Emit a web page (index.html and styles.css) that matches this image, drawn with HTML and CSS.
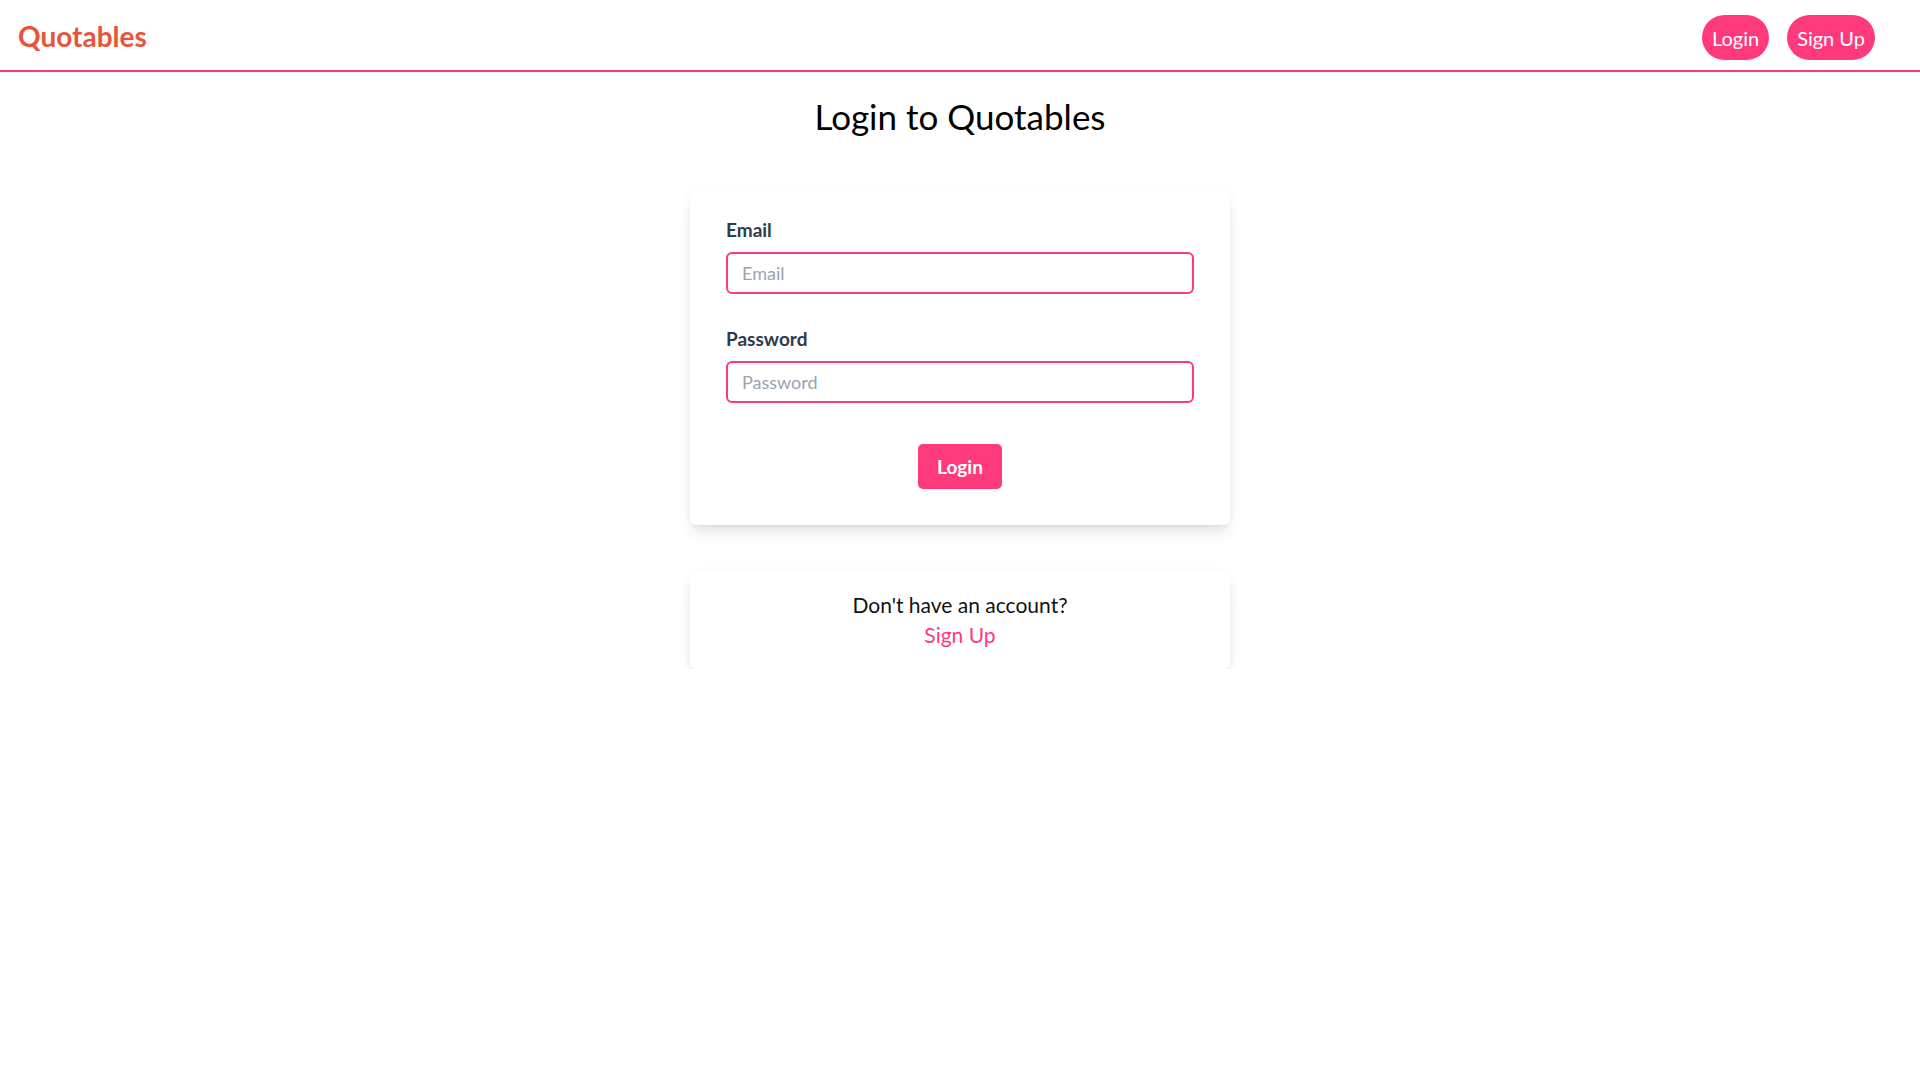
FILE: index.html
```html
<!DOCTYPE html>
<html lang="en">
<head>
<meta charset="utf-8">
<title>Login to Quotables</title>
<link rel="stylesheet" href="styles.css">
</head>
<body>
<header class="topbar">
  <a class="logo" href="#">Quotables</a>
  <nav class="nav">
    <a class="pill" href="#">Login</a>
    <a class="pill" href="#">Sign Up</a>
  </nav>
</header>
<main class="page">
  <h1 class="title">Login to Quotables</h1>
  <form class="card form-card">
    <label class="field-label" for="email">Email</label>
    <input class="field" id="email" type="email" placeholder="Email">
    <label class="field-label second" for="password">Password</label>
    <input class="field" id="password" type="password" placeholder="Password">
    <div class="actions">
      <button class="submit" type="button">Login</button>
    </div>
  </form>
  <section class="card signup-card">
    <p class="signup-text">Don't have an account?</p>
    <a class="signup-link" href="#">Sign Up</a>
  </section>
</main>
</body>
</html>
```
FILE: styles.css
```css
* { box-sizing: border-box; }
html, body { margin: 0; padding: 0; background: #ffffff; }
body { font-family: "Lato", "Open Sans", sans-serif; color: #000; }

.topbar {
  height: 72px;
  display: flex;
  align-items: center;
  justify-content: space-between;
  padding: 4px 45px 0 18px;
  border-bottom: 2px solid #ff3a7c;
}
.logo {
  font-size: 28px;
  font-weight: 700;
  color: #e9533b;
  text-decoration: none;
  line-height: 1;
  margin-top: -2px;
}
.nav { display: flex; gap: 18px; }
.pill {
  height: 45px;
  display: flex;
  align-items: center;
  padding: 1px 10px 0;
  border-radius: 999px;
  background: #ff3a7c;
  color: #fff;
  text-decoration: none;
  font-size: 20px;
}

.page {
  display: flex;
  flex-direction: column;
  align-items: center;
}
.title {
  margin: 23px 0 54px;
  font-size: 35px;
  font-weight: 400;
  line-height: 42px;
  color: #000;
}
.card {
  width: 540px;
  background: #fff;
  border-radius: 6px;
  box-shadow: 0 10px 15px -3px rgba(0,0,0,0.1), 0 4px 6px -2px rgba(0,0,0,0.05), 0 0 12px rgba(0,0,0,0.03);
}
.form-card {
  display: flex;
  flex-direction: column;
  padding: 25px 36px 36px;
}
.field-label {
  font-size: 19px;
  font-weight: 700;
  line-height: 28px;
  color: #2f3a4c;
  margin-bottom: 8px;
}
.field-label.second { margin-top: 31px; }
.field {
  height: 42px;
  width: 100%;
  border: 2px solid #ff3a7c;
  border-radius: 6px;
  padding: 0 14px;
  font-family: inherit;
  font-size: 18px;
  color: #111;
  outline: none;
}
.field::placeholder { color: #9aa3b2; }
.actions {
  display: flex;
  justify-content: center;
  margin-top: 41px;
}
.submit {
  width: 84px;
  height: 45px;
  border: none;
  border-radius: 5px;
  background: #ff3a7c;
  color: #fff;
  font-family: inherit;
  font-size: 19px;
  font-weight: 700;
}
.signup-card {
  margin-top: 47px;
  padding: 18px 0 19px;
  display: flex;
  flex-direction: column;
  align-items: center;
}
.signup-text {
  margin: 0;
  font-size: 21px;
  line-height: 30px;
  color: #111;
}
.signup-link {
  font-size: 21px;
  line-height: 30px;
  color: #ff3a7c;
  text-decoration: none;
}
```
